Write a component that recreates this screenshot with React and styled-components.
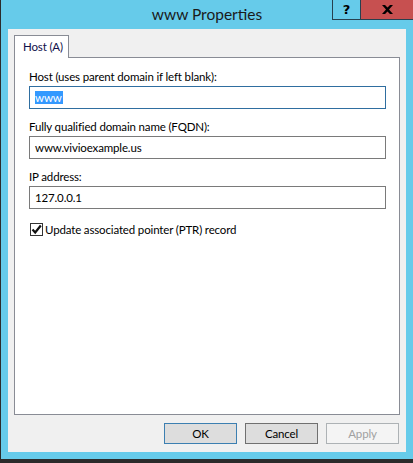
import React from "react";
import styled, { createGlobalStyle } from "styled-components";

const Global = createGlobalStyle`
  html, body { margin: 0; padding: 0; background: #2b2b2b; overflow: hidden; }
  body { font-family: Lato, "Segoe UI", sans-serif; }
  * { box-sizing: border-box; }
`;

const Window = styled.div`
  width: 413px;
  height: 463px;
  background: #66cbea;
  border-left: 1px solid #2b2b2b;
  border-bottom: 4px solid #2b2b2b;
  padding: 0 7px 7px 7px;
  display: flex;
  flex-direction: column;
`;

const TitleBar = styled.div`
  display: grid;
  grid-template-columns: 1fr auto;
  height: 29px;
  margin-right: -7px;
`;

const Title = styled.div`
  grid-column: 1 / 3;
  grid-row: 1;
  align-self: center;
  justify-self: center;
  font-family: Lato, sans-serif;
  font-size: 15.5px;
  color: #1a1a1a;
  margin-top: -1px;
  margin-right: 7px;
`;

const Captions = styled.div`
  grid-column: 2;
  grid-row: 1;
  align-self: start;
  display: flex;
`;

const CaptionButton = styled.div`
  width: ${(p) => p.$w}px;
  height: 20px;
  background: ${(p) => p.$bg};
  border-bottom: 1px solid #27404f;
  border-left: ${(p) => (p.$left ? "1px solid #27404f" : "none")};
  border-right: ${(p) => (p.$right ? "1px solid #27404f" : "none")};
  display: flex;
  align-items: center;
  justify-content: center;
  font-family: "DejaVu Sans", sans-serif;
  font-weight: bold;
  font-size: 13px;
  line-height: 1;
  color: #000;
  padding-bottom: 1px;
`;

const Client = styled.div`
  flex: 1;
  background: #f0f0f0;
  padding: 6px 7px 8px 6px;
  display: flex;
  flex-direction: column;
  font-size: 11.5px;
  letter-spacing: -0.15px;
`;

const TabStrip = styled.div`
  display: flex;
  height: 22px;
`;

const Tab = styled.div`
  position: relative;
  z-index: 1;
  width: 55px;
  height: 23px;
  background: #fff;
  border: 1px solid #898c95;
  border-bottom: none;
  color: #10104a;
  display: flex;
  align-items: center;
  padding-left: 8px;
  padding-bottom: 1px;
`;

const Panel = styled.div`
  height: 358px;
  width: 386px;
  background: #fff;
  border: 1px solid #898c95;
  padding: 11px 13px 0 14px;
  display: flex;
  flex-direction: column;
`;

const Field = styled.div`
  display: flex;
  flex-direction: column;
  gap: 2px;
  margin-bottom: ${(p) => p.$mb}px;
`;

const Label = styled.div`
  line-height: 15px;
  color: #000;
  height: 15px;
`;

const TextBox = styled.div`
  height: 23px;
  border: 1px solid ${(p) => (p.$focus ? "#2f6ea0" : "#7a7a7a")};
  background: #fff;
  display: flex;
  align-items: center;
  padding-left: 5px;
  color: #000;
`;

const Selected = styled.span`
  background: #3399ff;
  color: #fff;
  line-height: 13px;
  height: 13px;
  display: inline-flex;
  align-items: center;
  padding-right: 1px;
`;

const CheckRow = styled.label`
  display: flex;
  align-items: center;
  gap: 2px;
  line-height: 15px;
  height: 15px;
  color: #000;
  margin-top: 13px;
  margin-left: 1px;
`;

const Box = styled.span`
  width: 13px;
  height: 13px;
  border: 1px solid #333;
  background: #fff;
  display: flex;
  align-items: center;
  justify-content: center;
`;

const Buttons = styled.div`
  display: flex;
  justify-content: flex-end;
  gap: 8px;
  margin-top: 8px;
`;

const Button = styled.div`
  width: 73px;
  height: 21px;
  display: flex;
  align-items: center;
  justify-content: center;
  color: ${(p) => (p.$disabled ? "#a0a0a0" : "#000")};
  background: ${(p) => (p.$disabled ? "#f4f4f4" : "#dddddd")};
  border: 1px solid
    ${(p) => (p.$default ? "#3c7fb1" : p.$disabled ? "#adb2b5" : "#707070")};
`;

export default function App() {
  return (
    <>
      <Global />
      <Window>
        <TitleBar>
          <Title>www Properties</Title>
          <Captions>
            <CaptionButton $w={29} $bg="#66cbea" $left $right>
              ?
            </CaptionButton>
            <CaptionButton $w={52} $bg="#c75050">
              <svg width="11" height="9" viewBox="0 0 11 9">
                <path
                  d="M0 0 H3 L5.5 2.6 L8 0 H11 L7 4.5 L11 9 H8 L5.5 6.4 L3 9 H0 L4 4.5 Z"
                  fill="#000"
                />
              </svg>
            </CaptionButton>
          </Captions>
        </TitleBar>
        <Client>
          <TabStrip>
            <Tab>Host (A)</Tab>
          </TabStrip>
          <Panel>
            <Field $mb={10}>
              <Label>Host (uses parent domain if left blank):</Label>
              <TextBox $focus>
                <Selected>www</Selected>
              </TextBox>
            </Field>
            <Field $mb={10}>
              <Label>Fully qualified domain name (FQDN):</Label>
              <TextBox>www.vivioexample.us</TextBox>
            </Field>
            <Field $mb={0}>
              <Label>IP address:</Label>
              <TextBox>127.0.0.1</TextBox>
            </Field>
            <CheckRow>
              <Box>
                <svg width="11" height="11" viewBox="0 0 11 11">
                  <path
                    d="M1.5 5.5 L4.2 8.5 L9.8 1.5"
                    fill="none"
                    stroke="#111"
                    strokeWidth="2.2"
                  />
                </svg>
              </Box>
              Update associated pointer (PTR) record
            </CheckRow>
          </Panel>
          <Buttons>
            <Button $default>OK</Button>
            <Button>Cancel</Button>
            <Button $disabled>Apply</Button>
          </Buttons>
        </Client>
      </Window>
    </>
  );
}
